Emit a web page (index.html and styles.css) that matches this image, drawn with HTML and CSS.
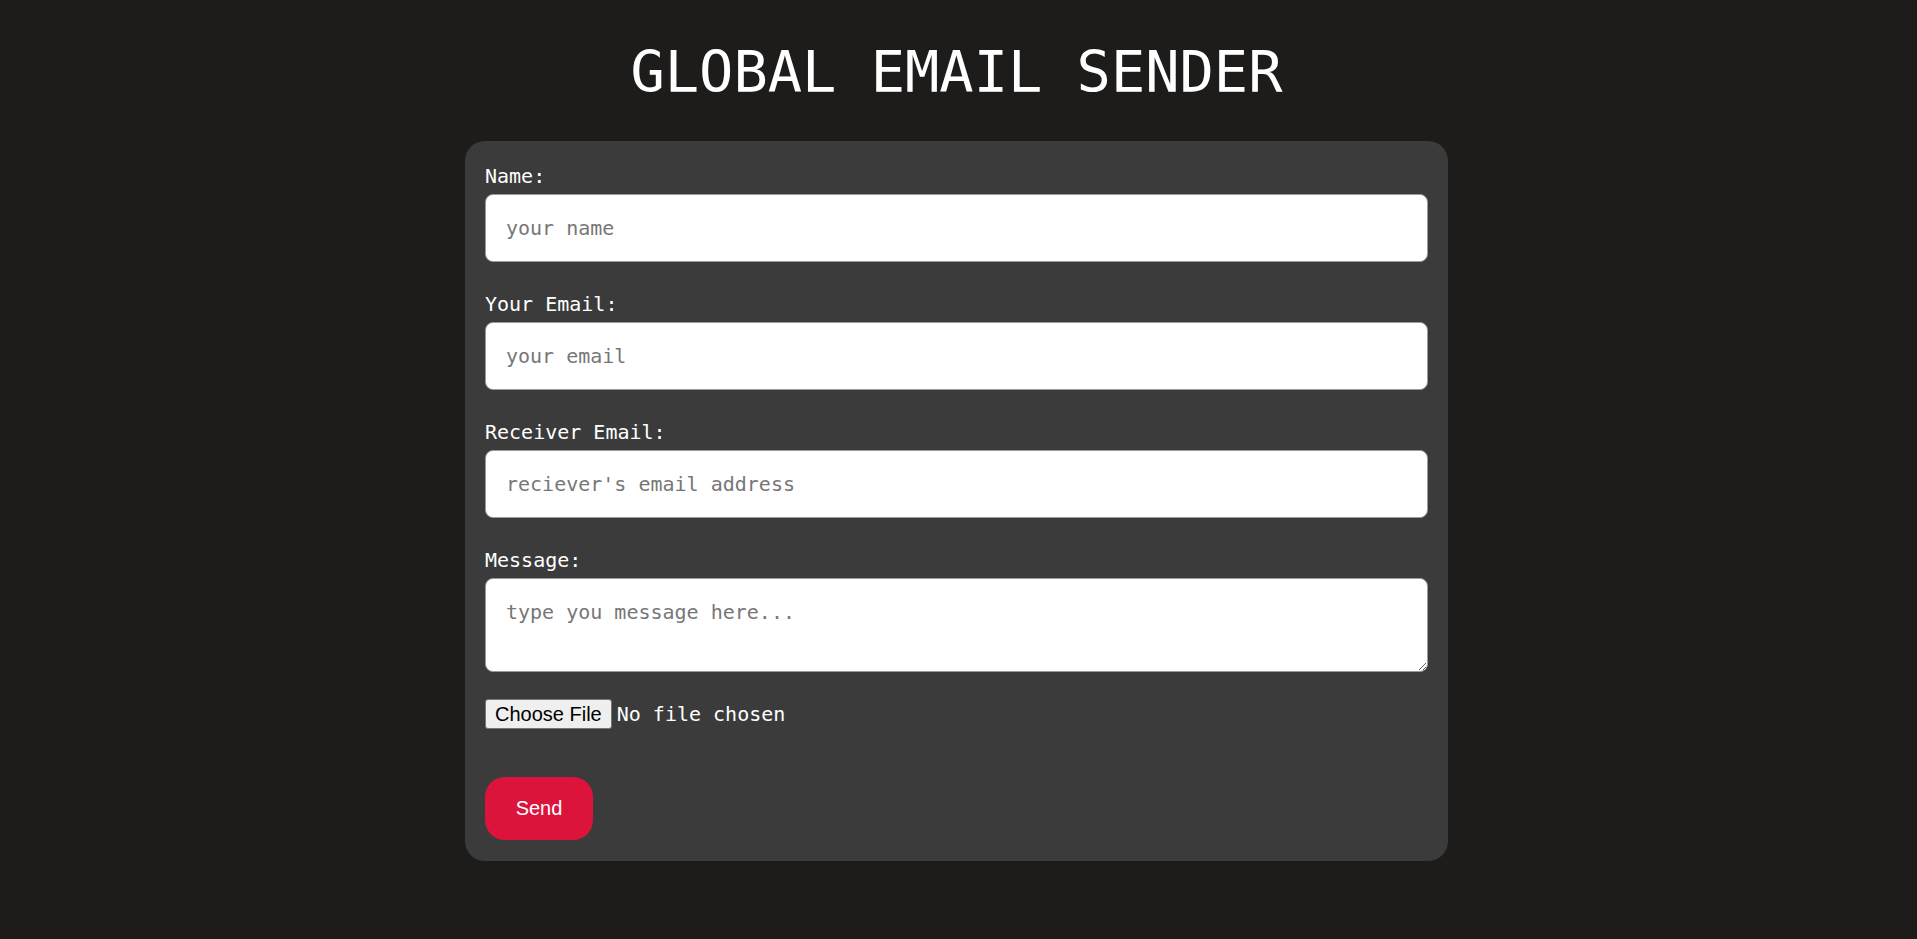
FILE: index.html
```html
<!DOCTYPE html>
<html lang="en">
<head>
<meta charset="utf-8">
<title>Global Email Sender</title>
<link rel="stylesheet" href="styles.css">
</head>
<body>
<h1 class="title">GLOBAL EMAIL SENDER</h1>
<form class="card">
  <label class="label" for="name">Name:</label>
  <input class="field" id="name" type="text" placeholder="your name">
  <label class="label" for="email">Your Email:</label>
  <input class="field" id="email" type="email" placeholder="your email">
  <label class="label" for="receiver">Receiver Email:</label>
  <input class="field" id="receiver" type="email" placeholder="reciever's email address">
  <label class="label" for="message">Message:</label>
  <textarea class="field area" id="message" placeholder="type you message here..."></textarea>
  <input class="file-input" type="file">
  <button class="send" type="button">Send</button>
</form>
</body>
</html>
```
FILE: styles.css
```css
html, body {
  margin: 0;
  padding: 0;
}
body {
  padding-right: 4px;
  background: #1e1c1b;
  color: #ffffff;
  font-family: "DejaVu Sans Mono", "Liberation Mono", monospace;
}
.title {
  margin: 39px 0 36px;
  font-size: 57px;
  line-height: 66px;
  font-weight: normal;
  text-align: center;
  color: #ffffff;
}
.card {
  box-sizing: border-box;
  width: 983px;
  margin: 0 auto;
  padding: 23px 20px 21px;
  background: #3b3b3b;
  border-radius: 20px;
  display: flex;
  flex-direction: column;
  align-items: flex-start;
}
.label {
  display: block;
  font-size: 20px;
  line-height: 24px;
  color: #ffffff;
}
.field {
  box-sizing: border-box;
  display: block;
  width: 100%;
  height: 68px;
  margin: 6px 0 30px;
  padding: 0 20px;
  border: 1px solid #9a9a9a;
  border-radius: 8px;
  background: #ffffff;
  color: #222;
  font-family: "DejaVu Sans Mono", "Liberation Mono", monospace;
  font-size: 20px;
  outline: none;
}
.field::placeholder {
  color: #777777;
}
.area {
  height: 94px;
  margin-bottom: 0;
  padding: 22px 20px;
  resize: vertical;
  line-height: 23px;
}
.file-input {
  display: block;
  height: 30px;
  margin-top: 27px;
  font-family: "DejaVu Sans Mono", "Liberation Mono", monospace;
  font-size: 20px;
  color: #ffffff;
}
.file-input::file-selector-button {
  box-sizing: border-box;
  height: 30px;
  padding: 0 9px;
  margin-right: 5px;
  border: 1px solid #767676;
  border-radius: 3px;
  background: #efefef;
  color: #000000;
  font-family: "Liberation Sans", Arial, sans-serif;
  font-size: 20px;
}
.send {
  margin-top: 48px;
  width: 108px;
  height: 63px;
  border: none;
  border-radius: 20px;
  background: #dc143c;
  color: #ffffff;
  font-family: "Liberation Sans", Arial, sans-serif;
  font-size: 20px;
  cursor: pointer;
}
```
